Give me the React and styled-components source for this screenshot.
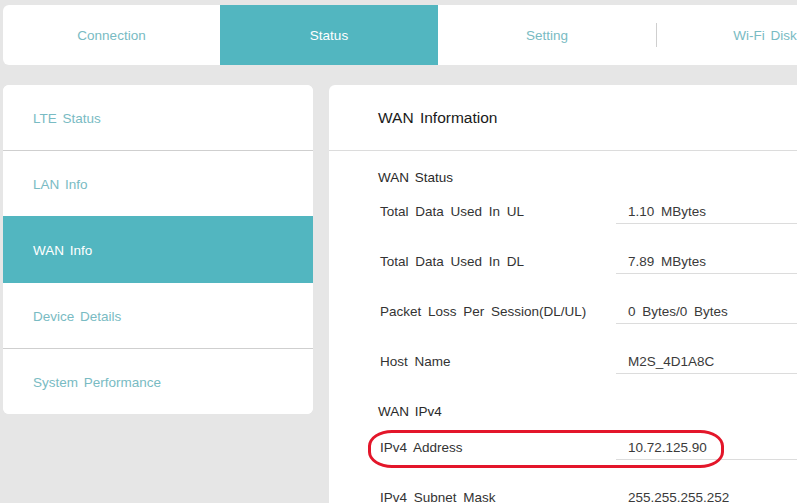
import React from "react";
import styled, { createGlobalStyle } from "styled-components";

const GlobalStyle = createGlobalStyle`
  html, body {
    margin: 0;
    padding: 0;
    background: #e6e6e6;
    overflow: hidden;
  }
  body {
    font-family: "Liberation Sans", Arial, sans-serif;
  }
`;

const TEAL = "#52b6c0";

const Page = styled.div`
  width: 797px;
  height: 503px;
  padding: 5px 0 0 3px;
  box-sizing: border-box;
  overflow: hidden;
`;

const TabBar = styled.nav`
  display: flex;
  width: 872px;
  height: 60px;
  background: #fff;
  border-radius: 6px 0 0 6px;
  overflow: hidden;
`;

const Tab = styled.div`
  position: relative;
  flex: 0 0 ${(p) => p.$w || 218}px;
  display: flex;
  align-items: center;
  justify-content: center;
  font-size: 13.5px;
  word-spacing: 2px;
  color: ${(p) => (p.$active ? "#fff" : "#79bbc3")};
  background: ${(p) => (p.$active ? TEAL : "transparent")};
  ${(p) =>
    p.$sep &&
    `
    &::before {
      content: "";
      position: absolute;
      left: 0;
      top: 18px;
      height: 24px;
      width: 1px;
      background: #cfcfcf;
    }
  `}
`;

const Content = styled.div`
  display: flex;
  gap: 16px;
  margin-top: 20px;
  align-items: flex-start;
`;

const Sidebar = styled.aside`
  flex: 0 0 310px;
  background: #fff;
  border-radius: 6px;
  overflow: hidden;
`;

const SideItem = styled.div`
  height: 63px;
  display: flex;
  align-items: center;
  padding: 2px 0 0 30px;
  font-size: 13.5px;
  word-spacing: 2px;
  color: ${(p) => (p.$active ? "#fff" : "#79bbc3")};
  background: ${(p) => (p.$active ? TEAL : "#fff")};
  border-top: 1px solid ${(p) => (p.$active || p.$afterActive ? TEAL : "#cfcfcf")};
  &:first-child {
    border-top: 0;
  }
`;

const Panel = styled.section`
  flex: 0 0 560px;
  height: 440px;
  background: #fff;
  border-radius: 6px 0 0 0;
`;

const PanelHeader = styled.header`
  height: 65px;
  display: flex;
  align-items: center;
  padding-left: 49px;
  border-bottom: 1px solid #dcdcdc;
  font-size: 15.5px;
  word-spacing: 2px;
  color: #1a1a1a;
`;

const PanelBody = styled.div`
  padding: 17px 0 0 49px;
`;

const SectionTitle = styled.div`
  line-height: 20px;
  padding-top: ${(p) => (p.$first ? 0 : 2)}px;
  margin-bottom: ${(p) => (p.$first ? 12 : 14)}px;
  font-size: 13.5px;
  word-spacing: 2px;
  color: #2a2a2a;
`;

const Row = styled.div`
  position: relative;
  display: grid;
  grid-template-columns: 238px 1fr;
  margin-bottom: 26px;
  font-size: 13.5px;
  word-spacing: 3px;
  ${(p) =>
    p.$circled &&
    `
    &::after {
      content: "";
      position: absolute;
      left: -10px;
      top: -6px;
      width: 350px;
      height: 32px;
      border: 3px solid #e3162a;
      border-radius: 24px / 16px;
    }
  `}
`;

const Label = styled.div`
  line-height: 24px;
  padding-left: 2px;
  color: #333;
`;

const Value = styled.div`
  line-height: 23px;
  padding-left: 12px;
  border-bottom: 1px solid #dcdcdc;
  color: #3a3a3a;
`;

const tabs = [
  { name: "Connection", w: 217 },
  { name: "Status", active: true },
  { name: "Setting" },
  { name: "Wi-Fi Disk", sep: true },
];

const menu = ["LTE Status", "LAN Info", "WAN Info", "Device Details", "System Performance"];

const statusRows = [
  ["Total Data Used In UL", "1.10 MBytes"],
  ["Total Data Used In DL", "7.89 MBytes"],
  ["Packet Loss Per Session(DL/UL)", "0 Bytes/0 Bytes"],
  ["Host Name", "M2S_4D1A8C"],
];

const ipv4Rows = [
  ["IPv4 Address", "10.72.125.90", true],
  ["IPv4 Subnet Mask", "255.255.255.252"],
];

export default function App() {
  const activeIdx = 2;
  return (
    <>
      <GlobalStyle />
      <Page>
        <TabBar>
          {tabs.map((t) => (
            <Tab key={t.name} $w={t.w} $active={t.active} $sep={t.sep}>
              {t.name}
            </Tab>
          ))}
        </TabBar>
        <Content>
          <Sidebar>
            {menu.map((m, i) => (
              <SideItem key={m} $active={i === activeIdx} $afterActive={i === activeIdx + 1}>
                {m}
              </SideItem>
            ))}
          </Sidebar>
          <Panel>
            <PanelHeader>WAN Information</PanelHeader>
            <PanelBody>
              <SectionTitle $first>WAN Status</SectionTitle>
              {statusRows.map(([l, v]) => (
                <Row key={l}>
                  <Label>{l}</Label>
                  <Value>{v}</Value>
                </Row>
              ))}
              <SectionTitle>WAN IPv4</SectionTitle>
              {ipv4Rows.map(([l, v, c]) => (
                <Row key={l} $circled={c}>
                  <Label>{l}</Label>
                  <Value>{v}</Value>
                </Row>
              ))}
            </PanelBody>
          </Panel>
        </Content>
      </Page>
    </>
  );
}
